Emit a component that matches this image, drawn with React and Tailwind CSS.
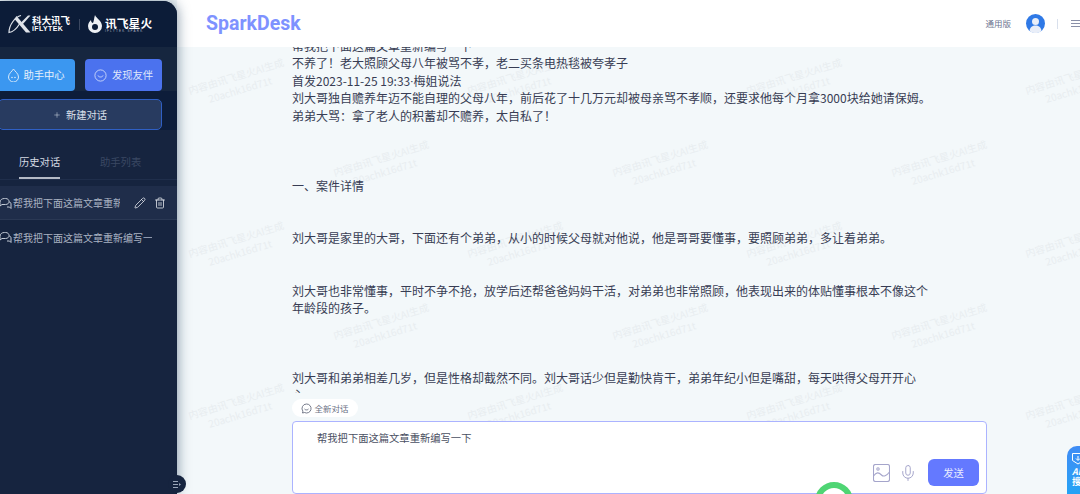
import React from 'react';
import { Plus, Pencil, Trash2, Mic } from 'lucide-react';

const cjk = "font-['Noto_Sans_CJK_SC','Noto_Sans',sans-serif]";

// watermark grid read off the screenshot (centre points)
const marks = [
  [238, 83], [517, 83], [796, 83], [1075, 83],
  [383, 165], [662, 165], [941, 165],
  [238, 246], [517, 246], [796, 246], [1075, 246],
  [383, 328], [662, 328], [941, 328],
  [238, 408], [517, 408], [796, 408], [1075, 408],
];

const Bubbles = () => (
  <svg width="14" height="14" viewBox="0 0 14 14" fill="none" stroke="#c3cad6" strokeWidth="1" className="shrink-0">
    <path d="M1 6.500C1 3.800 3 2.500 5.500 2.500h1C9 2.500 10 4 10 5.500S9 8.500 6.500 8.500H3L1 10z" />
    <path d="M8 11h2.500L12 12.500V8c0-1.200-.8-2-2-2" />
  </svg>
);

const Logo = () => (
  <div className="h-[46px] shrink-0 bg-[#0c1c38] rounded-tr-[14px] flex items-center pl-[8px] text-white">
    <svg width="23" height="20" viewBox="0 0 23 20" fill="none">
      <path d="M13 1.500C7 3 1 11 1 18.500c4-.5 8-4.500 10.500-8.500" stroke="#dfe3ea" strokeWidth="1.200" />
      <path d="M8.500 2l14 16.500h-4.500L6.500 5z" fill="#dfe3ea" />
      <path d="M13 8.500L20 1.500h2.500L14.500 10.500z" fill="#dfe3ea" />
    </svg>
    <div className="ml-[1px] w-[40px] flex flex-col leading-none">
      <span className={`${cjk} text-[9.500px] font-bold leading-[10px] whitespace-nowrap`}>科大讯飞</span>
      <span className="font-['Liberation_Sans',sans-serif] text-[7px] font-bold tracking-[0.400px] leading-[8px] whitespace-nowrap">iFLYTEK</span>
    </div>
    <div className="w-px h-[11px] bg-[#3b4760] ml-[7px] mr-[8px]" />
    <svg width="14" height="18" viewBox="0 0 14 18" fill="#eef1f5">
      <path d="M7 0c1 3 7 6 7 11a7 7 0 0 1-14 0C0 8 2 6 3 5c0 2 1 3 2 3 1-2 1-5 2-8z" />
      <circle cx="7" cy="12" r="3" fill="#0c1c38" />
    </svg>
    <div className="ml-[3px] flex flex-col leading-none">
      <span className={`${cjk} text-[11.800px] font-bold leading-[13px] whitespace-nowrap`}>讯飞星火</span>
      <span className="font-['Liberation_Sans',sans-serif] text-[3px] tracking-[1.200px] leading-[4px] text-[#a9b2c2] whitespace-nowrap">IFLYTEK SPARK</span>
    </div>
  </div>
);

const Sidebar = () => (
  <aside className={`${cjk} relative z-20 w-[177px] shrink-0 mt-[1px] flex flex-col bg-[#16243f] rounded-tr-[14px] shadow-[0_0_13px_rgba(40,70,100,0.6)]`}>
    <Logo />
    <div className="h-[44px] shrink-0 flex items-end gap-[10px] -ml-[3px] bg-[#16263f]">
      <div className="w-[78px] h-[32px] rounded-[4px] bg-[#3b97f0] flex items-center justify-center gap-[3px] text-[10.300px] text-[#e6f0fb]">
        <svg width="13" height="14" viewBox="0 0 13 14" fill="none" stroke="#e6f0fb" strokeWidth="0.900">
          <path d="M6.500 1C8 3.500 11.500 5.500 11.500 9a5 5 0 0 1-10 0C1.500 5.500 5 3.500 6.500 1z" />
          <circle cx="5" cy="9.500" r="0.400" />
          <circle cx="8" cy="9.500" r="0.400" />
        </svg>
        助手中心
      </div>
      <div className="w-[77px] h-[32px] rounded-[4px] bg-[#4b72ee] flex items-center justify-center gap-[5px] text-[10.300px] text-[#dfe7fb]">
        <svg width="13" height="13" viewBox="0 0 13 13" fill="none" stroke="#dfe7fb" strokeWidth="0.800">
          <circle cx="6.500" cy="6.500" r="5.600" />
          <path d="M4 6.500c.5 2 4.500 2 5 0" />
        </svg>
        发现友伴
      </div>
    </div>
    <div className="h-[39px] shrink-0 bg-[#0d1d3a] flex items-end -ml-[2px]">
      <div className="w-[164px] h-[31px] rounded-[5px] bg-[#283b60] border border-[#2f5fc4] flex items-center justify-center gap-[5px] text-[10.300px] text-[#dbe0ea]">
        <Plus size={8} strokeWidth={1.500} />
        新建对话
      </div>
    </div>
    <div className="h-[50px] shrink-0 flex items-end border-b border-[#1f2e4b]">
      <div className="ml-[19px] w-[41px] pt-[3px] text-[10.300px] text-[#d5dae3] h-[28px] border-b-2 border-[#b4bac6] whitespace-nowrap">历史对话</div>
      <div className="ml-[40px] pt-[3px] text-[10.300px] text-[#3a4863] h-[28px] whitespace-nowrap">助手列表</div>
    </div>
    <div className="mt-[6px] h-[34px] bg-[#1f2d4a] border-b border-[#2a3854] flex items-center -ml-[4px] pl-[3px] text-[10px] text-[#aab3c2]">
      <Bubbles />
      <span className="w-[107px] overflow-hidden whitespace-nowrap">帮我把下面这篇文章重新编写一下</span>
      <Pencil size={12} strokeWidth={1.600} className="ml-[14px] text-[#e4e7ed]" />
      <Trash2 size={12} strokeWidth={1.600} className="ml-[8px] text-[#e4e7ed]" />
    </div>
    <div className="h-[34px] flex items-center -ml-[4px] pl-[3px] text-[10px] text-[#aab3c2]">
      <Bubbles />
      <span className="w-[139px] overflow-hidden whitespace-nowrap">帮我把下面这篇文章重新编写一下</span>
    </div>
    {/* collapse handle */}
    <div className="absolute left-[168px] top-[474px] w-[18px] h-[18px] rounded-full bg-[#16243f] flex items-center justify-center">
      <svg width="8" height="7" viewBox="0 0 8 7" stroke="#9aa5b8" strokeWidth="1">
        <path d="M0 .5h5M0 3.500h5M0 6.500h5" />
        <path d="M6 2l2 1.500L6 5z" fill="#9aa5b8" stroke="none" />
      </svg>
    </div>
  </aside>
);

const Header = () => (
  <header className="relative z-10 h-[47px] shrink-0 bg-white flex items-center pl-[29px]">
    <span className="font-['Roboto',sans-serif] text-[19.500px] font-bold text-[#7e92ff] tracking-[0px] leading-none">SparkDesk</span>
    <span className={`${cjk} ml-auto text-[8.500px] text-[#6d7590]`}>通用版</span>
    <svg width="19" height="19" viewBox="0 0 19 19" className="ml-[15px]">
      <circle cx="9.500" cy="9.500" r="9.500" fill="#2f79e6" />
      <circle cx="9.500" cy="7.500" r="3.500" fill="#e9eef8" />
      <path d="M3.500 17c.5-4 3-5.500 6-5.500s5.500 1.500 6 5.500a9.500 9.500 0 0 1-12 0z" fill="#e9eef8" />
    </svg>
    <div className="w-px h-[10px] bg-[#d9e0ec] ml-[12px]" />
    <div className="w-[9px] ml-[13px] flex flex-col gap-[2px]">
      <div className="h-px bg-[#8a90a8]" />
      <div className="h-px bg-[#8a90a8]" />
      <div className="h-px bg-[#8a90a8]" />
    </div>
  </header>
);

const Article = () => (
  <div className="flex-1 min-h-0 overflow-hidden pl-[115px] relative">
    <div className="w-[645px] -mt-[10px] text-[12px] leading-[17.400px] text-[#383d54]">
      <p>帮我把下面这篇文章重新编写一下</p>
      <p>不养了！老大照顾父母八年被骂不孝，老二买条电热毯被夸孝子</p>
      <p>首发2023-11-25 19:33<span className="font-['Roboto',sans-serif] leading-[0]">·</span>梅姐说法</p>
      <p className="whitespace-nowrap">刘大哥独自赡养年迈不能自理的父母八年，前后花了十几万元却被母亲骂不孝顺，还要求他每个月拿3000块给她请保姆。</p>
      <p>弟弟大骂：拿了老人的积蓄却不赡养，太自私了！</p>
      <p className="mt-[53px]">一、案件详情</p>
      <p className="mt-[35px]">刘大哥是家里的大哥，下面还有个弟弟，从小的时候父母就对他说，他是哥哥要懂事，要照顾弟弟，多让着弟弟。</p>
      <p className="mt-[35px]">刘大哥也非常懂事，平时不争不抢，放学后还帮爸爸妈妈干活，对弟弟也非常照顾，他表现出来的体贴懂事根本不像这个年龄段的孩子。</p>
      <p className="mt-[52px]">刘大哥和弟弟相差几岁，但是性格却截然不同。刘大哥话少但是勤快肯干，弟弟年纪小但是嘴甜，每天哄得父母开开心心。</p>
    </div>
  </div>
);

const Composer = () => (
  <div className="relative z-10 shrink-0 pl-[115px] pt-[6px]">
    <div className="w-[66px] h-[18px] rounded-full bg-white flex items-center justify-center gap-[2px] text-[8.500px] text-[#6c7286]">
      <svg width="11" height="11" viewBox="0 0 11 11" fill="none" stroke="#555c70" strokeWidth="0.800">
        <path d="M5.500 1a4.500 4.500 0 1 1-2 8.500L1.500 10l.4-1.800A4.500 4.500 0 0 1 5.500 1z" />
        <path d="M3.500 6c.5 1.200 3.500 1.200 4 0" />
      </svg>
      全新对话
    </div>
    <div className="mt-[4px] w-[695px] h-[73px] bg-white border border-[#abb3ff] rounded-[4px] relative flex flex-col">
      <div className="pl-[24px] pt-[8px] text-[10.300px] leading-[16px] text-[#4a4f62]">帮我把下面这篇文章重新编写一下</div>
      <div className="mt-auto mb-[7px] flex items-center justify-end pr-[7px]">
        <svg width="17" height="18" viewBox="0 0 17 18" fill="none" stroke="#a5a5cb" strokeWidth="1.100">
          <rect x="0.500" y="0.500" width="16" height="17" rx="2" />
          <circle cx="5" cy="5" r="1.200" />
          <path d="M.5 12c3-4 5-4 8-1 2 2 5 1 8-3" />
        </svg>
        <Mic size={18} strokeWidth={1.300} className="ml-[9px] text-[#a5a5cb]" />
        <div className="ml-[11px] w-[51px] h-[27px] rounded-[6px] bg-[#6479ff] flex items-center justify-center text-[10.300px] text-[#e8ebff]">发送</div>
      </div>
    </div>
  </div>
);

const App = () => {
  return (
    <div className={`${cjk} relative w-[1080px] h-[494px] overflow-hidden flex bg-[#f3f8fa]`}>
      <Sidebar />
      <main className="relative flex-1 min-w-0 flex flex-col">
        {marks.map(([x, y], i) => (
          <div
            key={i}
            className="absolute w-[120px] -translate-x-1/2 -translate-y-1/2 -rotate-[17deg] text-center text-[10px] leading-[14px] text-[#e8edf0] whitespace-nowrap"
            style={{ left: x - 177, top: y }}
          >
            内容由讯飞星火AI生成
            <br />
            20achk16d71t
          </div>
        ))}
        <Header />
        <Article />
        <Composer />
      </main>
      {/* stuff floating over the page */}
      <div className="absolute left-[815px] top-[482px] w-[38px] h-[38px] rounded-full border-[6px] border-[#4fd574] bg-white z-30" />
      <div className="absolute left-[1067px] top-[446px] w-[30px] h-[60px] rounded-l-[10px] bg-gradient-to-b from-[#3f8cf5] to-[#14a8f5] z-30 pl-[5px] pt-[6px] text-white leading-[10px]">
        <svg width="12" height="13" viewBox="0 0 12 13" fill="none" stroke="white" strokeWidth="1">
          <path d="M.5 1.500v7l5.500 3.500 5.500-3.500v-7z" />
          <path d="M6 4v4M4 6.500l2 2 2-2" />
        </svg>
        <div className="text-[9px] italic font-bold mt-[2px]">AI</div>
        <div className="text-[9px] font-bold">搜</div>
      </div>
    </div>
  );
};

export default App;
